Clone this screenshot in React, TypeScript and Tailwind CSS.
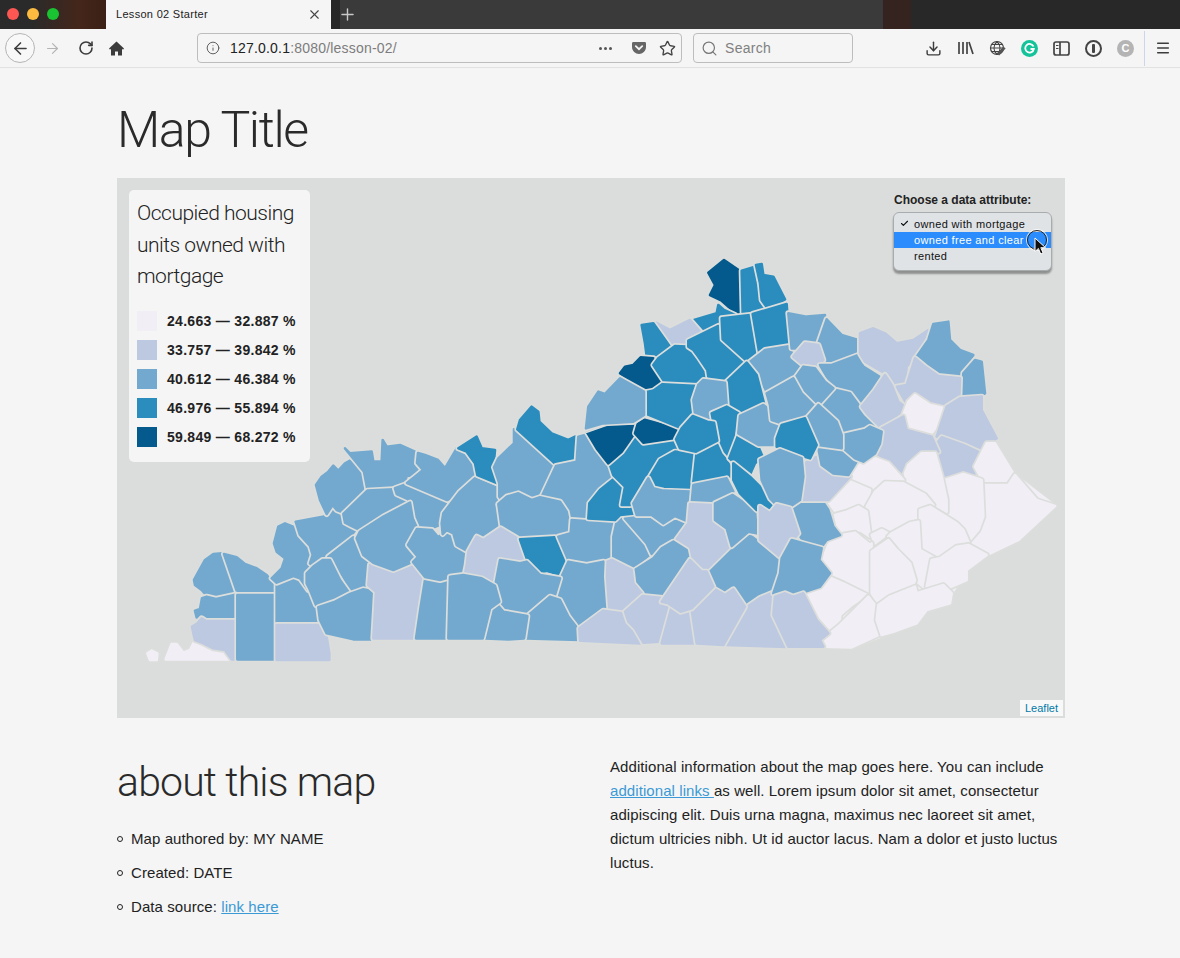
import React from "react";
import { ArrowLeft, ArrowRight, RotateCw, Info, Star, Search, Download, Menu, X, Plus, Check } from "lucide-react";

const C1 = "#f1eef6";
const C2 = "#bdc9e1";
const C3 = "#74a9cf";
const C4 = "#2b8cbe";
const C5 = "#045a8d";

type County = [string, string];

// western counties
const west: County[] = [
  [C1, "52,700 65,692 82,700 80,720 60,720"],
  [C1, "107,718 125,672 140,672 160,698 180,690 195,660 220,670 250,685 285,690 303,718"],
  [C3, "192,480 225,420 250,402 276,400 316,518 262,533 228,525 215,510 195,495"],
  [C3, "282,402 320,412 345,432 380,445 410,465 420,478 436,492 436,518 322,518"],
  [C3, "195,572 210,567 216,535 230,530 258,537 316,524 316,598 228,598 215,592 200,592"],
  [C2, "186,620 200,612 215,595 228,603 316,603 316,718 305,718 285,690 250,685 220,670 195,660 190,640"],
  [C3, "322,525 434,525 434,718 322,718"],
  [C3, "440,490 490,470 510,478 535,515 560,570 570,610 440,610"],
  [C2, "440,615 570,615 590,650 598,700 598,720 440,720"],
  [C3, "432,370 445,320 465,310 495,322 510,350 540,380 545,410 535,440 528,480 535,510 510,475 490,468 440,488 425,475 455,445 465,415 440,395"],
  [C3, "497,305 590,288 608,255 620,280 640,290 640,315 660,322 665,320 680,325 665,345 585,405 578,420 550,437 540,430 548,405 540,378 510,345"],
  [C3, "595,410 670,352 690,400 720,430 715,480 700,505 665,518 640,470"],
  [C3, "530,460 550,440 578,420 600,420 630,480 655,515 610,540 558,555 540,510 530,490"],
  [C3, "565,562 615,545 660,522 700,508 735,515 730,600 722,658 670,658 590,640 570,600"],
  [C2, "720,435 785,452 840,435 870,440 880,470 875,530 855,655 730,655 735,570 738,515 715,495"],
  [C3, "558,195 575,170 595,155 610,137 625,152 645,130 660,122 695,155 705,205 640,278 620,270 608,255 590,282 570,240"],
  [C3, "645,85 660,100 725,95 730,125 755,125 758,60 770,80 810,75 855,95 858,130 875,150 860,165 830,168 825,190 790,205 712,208 702,155"],
  [C3, "712,212 790,208 800,225 835,240 770,285 735,300 690,330 665,318 645,308 640,282"],
  [C3, "795,205 830,192 950,240 940,280 930,285 940,310 905,325 860,318 848,285 835,238 800,222"],
  [C3, "690,335 760,290 840,248 848,295 860,322 835,355 835,380 860,410 850,425 790,450 730,428 700,405 680,355"],
  [C3, "885,480 955,480 955,655 858,655 872,560"],
];

// counties that were easier to read straight off the page
const border: County[] = [
  [C3, "407,483 417,475 423,470 417,463 418,453 425,455 438,460 445,468 447,465 457,448 465,455 475,465 476,476 460,490 452,498 447,500"],
  [C3, "413,562 418,557 408,545 417,529 432,530 438,537 446,532 450,532 457,543 465,552 467,565 465,573 440,580 425,577"],
  [C3, "708,570 747,533 780,558 782,573 773,592 760,597 747,603 733,588 725,593 714,585"],
  [C2, "725,645 747,607 760,598 772,593 773,612 787,647"],
];

// central counties
const central: County[] = [
  [C3, "10,400 60,335 105,295 175,325 180,360 162,372 182,438 130,478 108,482 80,512 50,495 40,460 20,450 8,462 5,430"],
  [C4, "55,205 110,170 125,205 165,210 160,265 178,312 112,285 105,250 80,215"],
  [C3, "162,262 175,235 222,190 222,148 345,255 302,350 270,360 235,345 215,340 190,365 178,350 178,310"],
  [C4, "240,120 275,80 295,95 298,125 335,160 385,180 405,170 415,230 400,245 350,255 232,148"],
  [C3, "348,258 410,245 415,170 435,165 445,180 470,210 520,285 495,320 460,360 440,415 385,410 385,385 365,360 305,350"],
  [C3, "175,372 200,350 235,340 275,360 300,352 360,365 380,395 385,420 392,440 370,465 345,465 235,470 185,442"],
  [C2, "85,515 110,470 130,480 182,445 232,475 260,540 240,550 185,535 165,610 125,590 75,580 80,555"],
  [C4, "240,478 345,472 385,520 378,590 320,572 295,580 262,540"],
  [C3, "355,470 392,460 395,420 525,430 515,470 520,535 470,550 385,540"],
  [C3, "530,425 550,408 620,490 635,520 590,555 575,565 520,545 520,470"],
  [C3, "555,415 590,408 635,408 670,432 705,410 740,430 712,460 698,482 660,505 635,522 620,490"],
  [C4, "445,415 448,370 480,330 520,298 550,325 545,370 540,378 575,378 585,400 540,405 525,420"],
  [C4, "510,255 585,170 680,180 705,175 708,210 660,240 620,290 590,340 570,375 545,375 555,320 520,285"],
  [C5, "440,155 530,128 590,125 580,165 545,215 505,250 470,205"],
  [C5, "598,115 725,150 700,175 610,188 585,160"],
  [C4, "630,290 660,240 705,215 760,220 755,330 670,330 640,322"],
  [C3, "580,370 625,295 640,325 670,332 750,335 745,425 705,408 670,430 635,405 590,405"],
  [C3, "440,150 445,80 470,40 495,40 535,0 610,35 612,105 580,125 510,125"],
  [C4, "620,35 660,5 770,10 760,100 725,145 615,100"],
  [C4, "770,215 830,185 870,260 868,292 760,308"],
  [C3, "760,315 860,295 880,335 815,372 775,378 755,370"],
  [C2, "710,478 745,430 750,372 815,375 820,425 865,455 868,500 795,572 750,530 745,500"],
  [C3, "825,370 878,345 945,390 950,460 925,455 875,498 860,445 825,420"],
  [C3, "582,572 640,535 665,505 700,485 740,510 745,535 710,590 680,650 605,640 580,600"],
  [C2, "490,550 515,540 575,570 580,610 605,640 555,690 495,685 490,600"],
  [C3, "360,600 385,545 440,555 490,545 488,590 495,685 415,740 380,690 360,650 340,650"],
  [C3, "180,540 240,550 260,545 300,585 360,595 345,645 260,705 190,690 165,620"],
  [C3, "258,712 330,650 360,660 385,710 412,745 418,780 258,775"],
  [C3, "135,775 155,700 170,672 190,695 262,708 252,775 205,778"],
  [C3, "30,590 70,585 125,595 165,618 178,665 150,685 128,775 25,775"],
  [C2, "418,745 490,692 545,700 555,710 600,790 420,782"],
  [C2, "555,695 608,648 675,655 685,680 660,785 610,788 585,745 565,725"],
  [C2, "665,790 695,680 725,698 750,690 770,790"],
  [C2, "755,690 820,625 855,645 880,628 915,680 850,795 770,790"],
  [C2, "665,665 750,540 785,575 800,575 820,620 755,685 722,695 685,670"],
];

// northern counties
const north: County[] = [
  [C5, "415,68 462,30 508,62 515,125 512,185 498,190 455,152 420,135 435,105"],
  [C4, "515,62 550,52 558,100 572,155 590,180 518,188"],
  [C4, "558,45 575,42 580,75 610,80 645,148 595,178 575,150 570,100"],
  [C4, "372,210 440,190 445,165 462,180 495,195 450,205 445,225 405,245 385,225"],
  [C2, "258,218 300,240 360,210 395,250 355,270 345,285 305,285"],
  [C4, "215,225 250,220 300,290 262,325 230,318 225,280"],
  [C5, "150,370 165,350 190,345 212,322 250,325 248,350 270,392 245,410 220,415 190,400"],
  [C4, "250,345 265,325 315,288 350,290 370,310 390,345 412,375 385,395 280,390"],
  [C4, "355,272 445,228 455,270 525,335 465,395 415,380 412,360 385,320 370,300 355,290"],
  [C4, "455,205 540,195 560,310 530,332 458,268"],
  [C4, "548,192 650,162 658,282 585,298 568,310"],
  [C3, "540,335 585,300 660,288 668,322 695,345 660,385 620,420 590,425 570,385"],
  [C4, "530,338 560,375 582,460 505,490 478,465 470,395"],
  [C3, "385,405 400,390 465,398 470,465 425,485 415,510 375,490 370,450"],
  [C3, "48,535 55,470 85,425 105,432 150,385 222,425 222,495 190,515 100,520"],
  [C4, "425,490 470,470 505,490 478,620 465,605 440,550 430,515"],
  [C4, "318,568 335,535 368,498 412,515 432,518 442,572 378,605 330,595"],
  [C4, "505,555 565,590 578,620 555,640 538,678 490,635 478,625"],
  [C4, "490,640 540,680 580,720 605,765 600,790 560,780 510,730 490,690"],
  [C3, "510,498 580,465 600,480 610,500 635,525 620,585 565,585 505,550"],
];

// eastern counties, the first one is a backing shape so small gaps stay pale
const east: County[] = [
  [C1, "270,500 300,455 430,490 535,505 645,490 680,400 735,450 765,495 885,588 775,690 680,735 620,780 575,850 500,900 400,965 275,1012 190,1010 205,965 135,850 185,755 205,600"],
  [C3, "85,10 140,20 195,15 170,95 135,95 115,115 95,115"],
  [C3, "200,28 245,75 295,90 295,130 215,165 185,140 175,100"],
  [C2, "100,140 135,100 175,105 190,150 165,170 130,165"],
  [C3, "180,165 215,165 295,135 310,170 358,200 340,245 330,265 300,290 275,270 270,245 228,235 200,200"],
  [C3, "228,240 270,250 300,290 345,345 365,362 320,352 250,372 230,335 175,285"],
  [C3, "105,205 130,170 165,175 195,215 220,235 175,285 155,270 130,250"],
  [C3, "20,250 100,205 125,250 165,290 135,320 65,340 35,330 30,285"],
  [C2, "300,70 340,55 375,70 410,100 460,90 505,60 470,135 440,170 435,220 405,225 375,190 315,155 300,130"],
  [C3, "520,42 565,35 570,90 600,120 640,135 600,195 530,195 470,140 505,90"],
  [C3, "610,190 645,150 665,155 675,250 665,255 625,262 605,265"],
  [C2, "410,230 440,225 465,145 495,170 535,198 600,205 598,262 555,295 510,280 465,255 445,290"],
  [C2, "375,195 395,225 415,275 440,295 360,350 320,310 305,290 345,240"],
  [C1, "430,315 445,275 465,255 510,285 555,295 562,320 530,350 510,375 440,355"],
  [C2, "560,290 600,265 665,260 665,300 710,385 665,420 620,400 545,375 530,380"],
  [C2, "535,395 545,382 610,405 665,430 645,490 610,490 555,505 535,450"],
  [C2, "350,430 365,355 430,320 440,360 515,380 535,425 485,425 440,455 430,490 385,455"],
  [C1, "645,470 680,400 705,400 735,450 760,490 745,520 710,520 670,515"],
  [C1, "670,525 715,525 745,525 765,495 830,570 885,588 775,690 680,735 635,695 615,660 670,630 660,600"],
  [C1, "555,510 610,492 665,510 670,620 655,660 625,695 610,655 590,640 555,605 560,570"],
  [C1, "435,490 445,465 485,430 525,430 545,500 560,570 560,605 525,585 495,550 440,515"],
  [C1, "270,500 300,455 345,445 385,460 430,510 375,515 345,540 310,530"],
  [C1, "205,575 260,510 330,540 320,590 295,585 260,600 230,610"],
  [C1, "320,590 345,545 375,518 430,520 495,555 520,585 480,600 475,630 450,635 390,670 335,670 330,640"],
  [C1, "480,600 510,590 590,640 610,660 625,695 590,710 535,745 490,720 480,690"],
  [C1, "225,615 260,605 295,590 320,605 330,680 300,660 280,670 240,680"],
  [C1, "335,675 365,660 385,670 345,700"],
  [C1, "395,670 450,640 475,635 480,720 525,745 505,775 505,825 490,830 465,810 440,745 410,710 385,680"],
  [C1, "515,750 540,745 590,710 625,705 680,735 620,780 620,810 575,830 500,830"],
  [C1, "185,755 215,680 285,668 330,705 335,700 330,850 250,815 210,795 180,765"],
  [C1, "335,725 385,690 410,720 450,760 465,810 460,825 405,850 350,875 335,850"],
  [C1, "135,850 215,805 250,820 320,855 275,885 240,915 240,940 205,965 170,930"],
  [C1, "185,990 240,945 325,860 345,885 345,950 355,975 275,1012 190,1010"],
  [C1, "355,885 390,860 465,830 470,850 550,825 575,850 570,880 500,900 470,940 400,965 365,975 350,930"],
  [C3, "90,590 120,575 185,570 205,600 220,650 240,675 200,690 185,710 130,695 115,670"],
  [C2, "130,465 155,445 175,440 215,480 270,500 205,570 125,570 120,530 130,500"],
  [C3, "175,415 245,420 290,455 265,495 220,490 185,465"],
  [C3, "250,375 315,360 330,350 365,365 360,400 345,430 310,455 285,445 250,415"],
  [C3, "140,325 175,285 230,335 245,375 245,415 175,405"],
  [C4, "50,385 65,345 135,325 170,405 150,445 80,425 50,410"],
  [C3, "0,450 60,420 125,445 130,500 120,570 90,590 50,585 30,565 5,510"],
  [C2, "0,590 30,610 50,585 90,595 115,670 60,740 0,690"],
  [C3, "65,745 95,690 130,700 185,715 178,750 210,790 180,830 105,855 75,840 40,850 60,790"],
  [C2, "45,860 75,850 100,860 130,850 170,930 205,970 180,990 190,1010 85,1010 40,915"],
];

const LINE = "#dcdedc";

// every county is grown a little so that the next one paints over its outline,
// that leaves a single border line between two neighbours
function Counties({ items, x, y, scale }: { items: County[]; x: number; y: number; scale: number }) {
  return (
    <g transform={`translate(${x} ${y}) scale(${scale})`} strokeLinejoin="round">
      {items.map(([fill, points], i) => (
        <g key={i}>
          <polygon fill={fill} stroke={LINE} strokeWidth={6 / scale} points={points} />
          <polygon fill={fill} stroke={fill} strokeWidth={2.6 / scale} points={points} />
        </g>
      ))}
    </g>
  );
}

function KentuckyMap() {
  return (
    <svg className="block" width={948} height={540} viewBox="117 178 948 540">
      <Counties items={west} x={130} y={420} scale={1 / 3} />
      <Counties items={border} x={0} y={0} scale={1} />
      <Counties items={central} x={440} y={380} scale={1 / 3} />
      <Counties items={north} x={570} y={250} scale={1 / 3} />
      <Counties items={east} x={760} y={310} scale={1 / 3} />
    </svg>
  );
}

const legendRows = [
  { color: C1, label: "24.663 — 32.887 %" },
  { color: C2, label: "33.757 — 39.842 %" },
  { color: C3, label: "40.612 — 46.384 %" },
  { color: C4, label: "46.976 — 55.894 %" },
  { color: C5, label: "59.849 — 68.272 %" },
];

function Toolbar() {
  return (
    <div className="flex h-[39px] items-center border-b border-[#e2e2e2] bg-[#f5f5f5] pl-[5px] text-[#3c3c3c]">
      <div className="flex h-[30px] w-[30px] items-center justify-center rounded-full border border-[#b5b5b5] bg-[#f8f8f8]">
        <ArrowLeft size={19} strokeWidth={2} />
      </div>
      <ArrowRight size={17} strokeWidth={1.6} className="ml-[9px] text-[#b4b4b4]" />
      <RotateCw size={16} strokeWidth={2.4} className="ml-[17px]" />
      <svg className="ml-[14px]" width={17} height={17} viewBox="0 0 17 17">
        <path d="M8.500 1.500 1 8.500l1 1.200 1-.9V15.500h4v-4h3v4h4V8.800l1 .9 1-1.200z" fill="#3c3c3c" />
      </svg>
      <div className="ml-[72px] flex h-[30px] w-[485px] items-center rounded-[4px] border border-[#bdbdbd] bg-[#f5f5f5] text-[14px] tracking-[0.2px]">
        <Info size={14} strokeWidth={1.6} className="ml-[8px] text-[#555]" />
        <span className="ml-[10px] text-[#222]">127.0.0.1</span>
        <span className="text-[#7d7d7d]">:8080/lesson-02/</span>
        <span className="ml-auto flex gap-[2px]">
          <span className="h-[3px] w-[3px] rounded-full bg-[#555]" />
          <span className="h-[3px] w-[3px] rounded-full bg-[#555]" />
          <span className="h-[3px] w-[3px] rounded-full bg-[#555]" />
        </span>
        <svg className="ml-[19px]" width={16} height={16} viewBox="0 0 16 16">
          <path d="M1 3.500C1 2.400 1.800 2 2.500 2h11c.8 0 1.500.4 1.500 1.500V7c0 4-3.500 7-7 7s-7-3-7-7z" fill="#666" />
          <path d="M4.800 6.200 8 9.200l3.200-3" fill="none" stroke="#f5f5f5" strokeWidth={1.8} strokeLinecap="round" />
        </svg>
        <Star size={17} strokeWidth={1.9} className="ml-[12px] mr-[5px] text-[#444]" />
      </div>
      <div className="ml-[11px] flex h-[30px] w-[160px] items-center rounded-[4px] border border-[#bdbdbd] text-[14px] text-[#808080]">
        <Search size={17} strokeWidth={1.7} className="ml-[7px] text-[#777]" />
        <span className="ml-[7px] tracking-[0.3px]">Search</span>
      </div>
      <Download size={17} strokeWidth={2} className="ml-[72px]" />
      <svg className="ml-[15px]" width={17} height={16} viewBox="0 0 17 16" fill="none" stroke="#444" strokeWidth={1.7}>
        <path d="M2 2v12M6 2v12M10 2v12M12 2l4 12" />
      </svg>
      <svg className="ml-[15px]" width={17} height={17} viewBox="0 0 17 17" fill="none" stroke="#444" strokeWidth={1.2}>
        <circle cx={8} cy={8} r={6.5} />
        <path d="M1.500 8h13M8 1.500c-4 4-4 9 0 13M8 1.500c4 4 4 9 0 13M2.500 4.500h11M2.500 11.500h9" />
        <path d="M9 14.500l6.500-7" strokeWidth={3} stroke="#555" />
      </svg>
      <div className="ml-[15px] flex h-[17px] w-[17px] items-center justify-center rounded-full bg-[#15c39a] text-white">
        <svg width={11} height={11} viewBox="0 0 11 11" fill="none" stroke="#fff" strokeWidth={1.8}>
          <path d="M9.500 3.500A4.300 4.300 0 1 0 9.800 6H6.500" />
        </svg>
      </div>
      <svg className="ml-[15px]" width={17} height={15} viewBox="0 0 17 15" fill="none" stroke="#444" strokeWidth={1.7}>
        <rect x={1} y={1} width={15} height={13} rx={2} />
        <path d="M7 1v13" />
        <path d="M3 4.500h2.500M3 7.500h2.500" strokeWidth={1.2} />
      </svg>
      <div className="ml-[15px] flex h-[17px] w-[17px] items-center justify-center rounded-full border-2 border-[#444]">
        <span className="h-[9px] w-[3px] rounded-[1px] bg-[#444]" />
      </div>
      <div className="ml-[15px] flex h-[17px] w-[17px] items-center justify-center rounded-full bg-[#b4b4b4] text-[11px] font-bold text-white">
        C
      </div>
      <div className="ml-[10px] h-[35px] w-px bg-[#cdd6e8]" />
      <Menu size={16} strokeWidth={2.2} className="ml-[10px]" />
    </div>
  );
}

function TabBar() {
  return (
    <div className="flex h-[29px] bg-[#3a3a3a]">
      <div className="relative w-[106px] bg-[linear-gradient(90deg,#2a2a2a_0%,#2a2a2a_30%,#45261a_75%,#3a2016_100%)]">
        <span className="absolute left-[7px] top-[8px] h-[12px] w-[12px] rounded-full bg-[#fc5753]" />
        <span className="absolute left-[27px] top-[8px] h-[12px] w-[12px] rounded-full bg-[#fdbc40]" />
        <span className="absolute left-[47px] top-[8px] h-[12px] w-[12px] rounded-full bg-[#19c332]" />
      </div>
      <div className="flex w-[225px] items-center bg-[#f5f5f5] pl-[10px] text-[11px] tracking-[0.3px] text-[#222]">
        <span>Lesson 02 Starter</span>
        <X size={15} strokeWidth={1.8} className="ml-auto mr-[9px] text-[#444]" />
      </div>
      <div className="w-[9px] bg-[#262626]" />
      <div className="flex w-[543px] items-center">
        <Plus size={19} strokeWidth={1.8} className="-ml-[2px] text-[#c8c8c8]" />
      </div>
      <div className="w-[28px] bg-[#35231f]" />
      <div className="flex-1 bg-[#282828]" />
    </div>
  );
}

export default function App() {
  return (
    <div className="min-h-[958px] bg-[#f5f5f5] font-['Liberation_Sans',sans-serif] text-[#222]">
      <TabBar />
      <Toolbar />
      <div className="ml-[117px] w-[948px]">
        <h1 className="pt-[34px] pb-[20px] font-['Roboto',sans-serif] text-[50px] font-light leading-[56px] tracking-[-1.4px] text-[#2a2a2a]">
          Map Title
        </h1>
        <div className="relative h-[540px] w-[948px] bg-[#dbdddc]">
          <KentuckyMap />
          <div className="absolute left-[12px] top-[12px] h-[272px] w-[181px] rounded-[5px] bg-[#f5f5f5] pl-[8px] pt-[8px]">
            <div className="font-['Roboto',sans-serif] text-[21px] font-light leading-[31.5px] tracking-[-0.5px] text-[#222]">
              Occupied housing
              <br />
              units owned with
              <br />
              mortgage
            </div>
            <div className="mt-[18px] flex flex-col gap-[9px]">
              {legendRows.map((row) => (
                <div key={row.label} className="flex items-center gap-[10px]">
                  <span className="h-[20px] w-[20px]" style={{ backgroundColor: row.color }} />
                  <span className="text-[14px] font-bold leading-[20px] tracking-[0.3px] text-[#222]">{row.label}</span>
                </div>
              ))}
            </div>
          </div>
          <div className="absolute left-[777px] top-[13px] text-[12px] font-bold text-[#222]">
            Choose a data attribute:
          </div>
          <div className="absolute left-[776px] top-[34px] h-[59px] w-[159px] rounded-[6px] border border-[#a9acae] bg-[#dfe3e6] pt-[3px] text-[11px] tracking-[0.35px] shadow-[0_3px_2px_rgba(0,0,0,0.35)]">
            <div className="relative h-[16px] pl-[20px] leading-[16px] text-[#111]">
              <Check size={9} strokeWidth={3} className="absolute left-[6px] top-[3px]" />
              owned with mortgage
            </div>
            <div className="h-[16px] bg-[#2a8cfd] pl-[20px] leading-[16px] text-white">owned free and clear</div>
            <div className="h-[16px] pl-[20px] leading-[16px] text-[#111]">rented</div>
          </div>
          <div className="absolute left-[910px] top-[52px] h-[20px] w-[20px] rounded-full border-[1.5px] border-[#222] shadow-[0_0_0_1px_rgba(255,255,255,0.7)]" />
          <svg className="absolute left-[917px] top-[59px]" width={13} height={19} viewBox="0 0 13 19">
            <path d="M1 1v13.500l3.400-3 2.300 5.500 2.400-1-2.300-5.300h4.700z" fill="#111" stroke="#fff" strokeWidth={1} />
          </svg>
          <div className="absolute bottom-[2px] right-[2px] bg-white/80 px-[5px] text-[11px] leading-[16px] text-[#0078a8]">
            Leaflet
          </div>
        </div>
        <div className="mt-[37px] grid grid-cols-[493px_1fr]">
          <div>
            <h2 className="pt-[3px] font-['Roboto',sans-serif] text-[41px] font-light leading-[48px] tracking-[-0.85px] text-[#2a2a2a]">
              about this map
            </h2>
            <ul className="mt-[21px] flex flex-col gap-[10px] text-[15px] leading-[24px] tracking-[0.08px]">
              <li className="flex items-center">
                <span className="mr-[8px] h-[6px] w-[6px] rounded-full border border-[#222]" />
                Map authored by: MY NAME
              </li>
              <li className="flex items-center">
                <span className="mr-[8px] h-[6px] w-[6px] rounded-full border border-[#222]" />
                Created: DATE
              </li>
              <li className="flex items-center">
                <span className="mr-[8px] h-[6px] w-[6px] rounded-full border border-[#222]" />
                Data source:&nbsp;<span className="text-[#3b9ad6] underline">link here</span>
              </li>
            </ul>
          </div>
          <p className="w-[455px] text-[15px] leading-[24px] tracking-[0.08px]">
            Additional information about the map goes here. You can include{" "}
            <span className="text-[#3b9ad6] underline">additional links </span>as well. Lorem ipsum dolor sit amet,
            consectetur adipiscing elit. Duis urna magna, maximus nec laoreet sit amet, dictum ultricies nibh. Ut id
            auctor lacus. Nam a dolor et justo luctus luctus.
          </p>
        </div>
      </div>
    </div>
  );
}
